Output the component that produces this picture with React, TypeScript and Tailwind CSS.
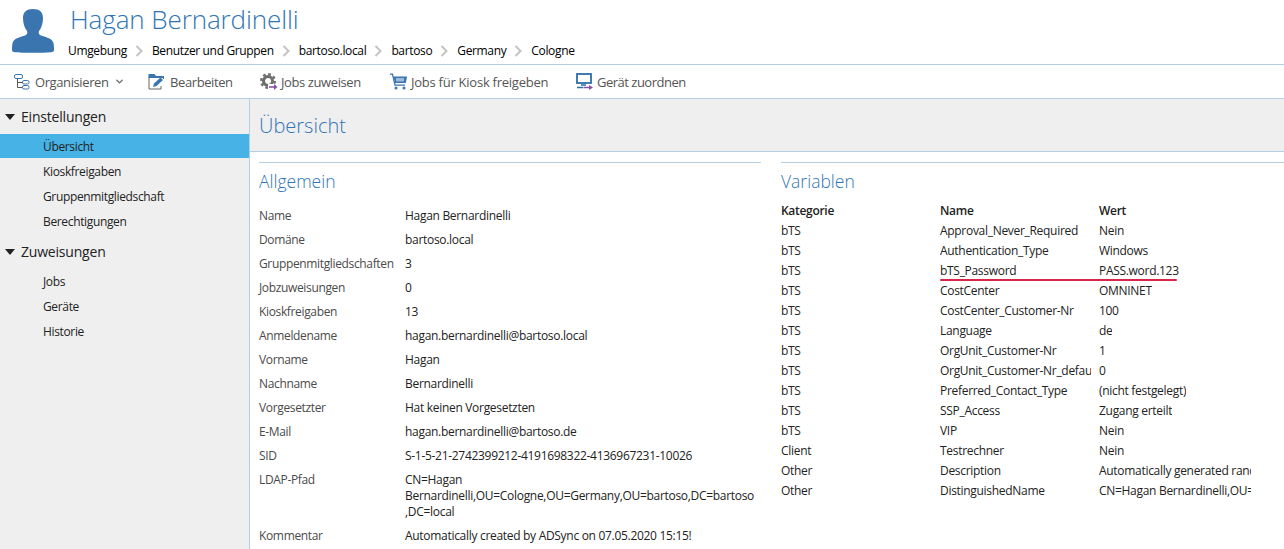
import { ChevronDown } from 'lucide-react';

const crumbs = ['Umgebung', 'Benutzer und Gruppen', 'bartoso.local', 'bartoso', 'Germany', 'Cologne'];

const general = [
  ['Name', 'Hagan Bernardinelli'],
  ['Domäne', 'bartoso.local'],
  ['Gruppenmitgliedschaften', '3'],
  ['Jobzuweisungen', '0'],
  ['Kioskfreigaben', '13'],
  ['Anmeldename', 'hagan.bernardinelli@bartoso.local'],
  ['Vorname', 'Hagan'],
  ['Nachname', 'Bernardinelli'],
  ['Vorgesetzter', 'Hat keinen Vorgesetzten'],
  ['E-Mail', 'hagan.bernardinelli@bartoso.de'],
  ['SID', 'S-1-5-21-2742399212-4191698322-4136967231-10026'],
];

const variables = [
  ['bTS', 'Approval_Never_Required', 'Nein'],
  ['bTS', 'Authentication_Type', 'Windows'],
  ['bTS', 'bTS_Password', 'PASS.word.123'],
  ['bTS', 'CostCenter', 'OMNINET'],
  ['bTS', 'CostCenter_Customer-Nr', '100'],
  ['bTS', 'Language', 'de'],
  ['bTS', 'OrgUnit_Customer-Nr', '1'],
  ['bTS', 'OrgUnit_Customer-Nr_default', '0'],
  ['bTS', 'Preferred_Contact_Type', '(nicht festgelegt)'],
  ['bTS', 'SSP_Access', 'Zugang erteilt'],
  ['bTS', 'VIP', 'Nein'],
  ['Client', 'Testrechner', 'Nein'],
  ['Other', 'Description', 'Automatically generated random value'],
  ['Other', 'DistinguishedName', 'CN=Hagan Bernardinelli,OU=Cologne,OU=Germany'],
];

function UserIcon() {
  return (
    <svg width="44" height="44" viewBox="0 0 44 44" className="shrink-0">
      <path
        fill="#3a75b0"
        d="M22 0C15.500 0 12 3 12 9C12 14 13.500 19 16 22C16.800 24 16 25.500 14 26.500C10 28 4.500 29 2.500 32C1 34 1 38 1 41C1 42.500 2 43 4 43.300C10 44 34 44 40 43.300C42 43 43 42.500 43 41C43 38 43 34 41.500 32C39.500 29 34 28 30 26.500C28 25.500 27.200 24 28 22C30.500 19 32 14 32 9C32 3 28.500 0 22 0z"
      />
    </svg>
  );
}

function OrgIcon() {
  return (
    <svg width="17" height="17" viewBox="0 0 17 17" fill="none" className="shrink-0">
      <rect x="1.500" y="1.500" width="8" height="4" rx="1.500" stroke="#3a75b0" />
      <rect x="9.500" y="7.500" width="6.500" height="3.500" rx="1.500" stroke="#3a75b0" />
      <rect x="9.500" y="12.500" width="6.500" height="3.500" rx="1.500" stroke="#3a75b0" />
      <path d="M4.500 6v8.500h5M4.500 9.500h5" stroke="#555" />
    </svg>
  );
}

function EditIcon() {
  return (
    <svg width="17" height="17" viewBox="0 0 17 17" fill="none" className="shrink-0">
      <path d="M.5 1h6l1.500 2h8v2H.5z" fill="#3a75b0" />
      <path d="M1 4v12h12v-3M15.500 4v2" stroke="#666" />
      <path d="M5 14l1-3.500 6.500-6 2.500 2.500-6.500 6z" fill="#3a75b0" />
    </svg>
  );
}

function JobsIcon() {
  return (
    <svg width="18" height="17" viewBox="0 0 18 17" fill="none" className="shrink-0 -mr-[2px]">
      <circle cx="8" cy="8" r="4.500" stroke="#6e6e6e" strokeWidth="3" />
      <circle cx="8" cy="8" r="6.800" stroke="#6e6e6e" strokeWidth="2.400" strokeDasharray="2.700 2.640" />
      <rect x="8" y="11" width="10" height="6" fill="#fff" />
      <path d="M9 14h6" stroke="#8a4fa3" strokeWidth="1.600" />
      <path d="M14 11l3.500 3-3.500 3z" fill="#8a4fa3" />
    </svg>
  );
}

function CartIcon() {
  return (
    <svg width="17" height="17" viewBox="0 0 17 17" fill="none" className="shrink-0 -mr-[1px]">
      <path d="M0 1.200h2.500l2.500 11h10" stroke="#3a75b0" strokeWidth="1.300" />
      <path d="M3.500 3.500H17l-1.200 6.500H5z" fill="#3a75b0" />
      <path d="M7 5v3.500M9 5v3.500M11 5v3.500M13 5v3.500" stroke="#fff" />
      <circle cx="6" cy="15" r="1.500" fill="#3a75b0" />
      <circle cx="14" cy="15" r="1.500" fill="#3a75b0" />
    </svg>
  );
}

function DeviceIcon() {
  return (
    <svg width="17" height="17" viewBox="0 0 17 17" fill="none" className="shrink-0 -mr-[1px]">
      <rect x="1" y="1" width="14" height="9" stroke="#2e6da4" strokeWidth="1.800" />
      <path d="M5 12h5M1 14.500h6.500" stroke="#2e6da4" strokeWidth="1.500" />
      <path d="M8 14.500h6" stroke="#8a4fa3" strokeWidth="1.500" />
      <path d="M13 12l4 2.500-4 2.500z" fill="#8a4fa3" />
    </svg>
  );
}

function Caret() {
  return <span className="w-0 h-0 border-l-[5px] border-r-[5px] border-t-[6px] border-l-transparent border-r-transparent border-t-[#222]" />;
}

function ToolButton({ icon, label, width, children }: { icon: React.ReactNode; label: string; width: string; children?: React.ReactNode }) {
  return (
    <div className={`flex items-center gap-[5px] ${width}`}>
      {icon}
      <span>{label}</span>
      {children}
    </div>
  );
}

export default function App() {
  return (
    <div className="w-[1284px] h-[549px] overflow-hidden bg-white text-[12px] leading-4 text-[#222] font-['Open_Sans','Noto_Sans',sans-serif] tracking-[-0.3px]">
      {/* Header */}
      <div className="h-[65px] flex items-start border-b border-[#b4cfe3] pl-[11px]">
        <div className="mt-[9px]"><UserIcon /></div>
        <div className="ml-[13px]">
          <div className="ml-[2px] h-[38px] text-[26px] leading-[38px] font-light text-[#2f75b5] tracking-[-0.1px]">Hagan Bernardinelli</div>
          <div className="flex items-center h-5 mt-[3px] text-black tracking-[-0.35px]">
            {crumbs.map((c, i) => (
              <div key={c} className="flex items-center">
                {i > 0 && (
                  <svg width="25" height="14" viewBox="0 0 25 14" fill="none">
                    <path d="M9.500 2l5 5-5 5" stroke="#c4c4c4" strokeWidth="2" />
                  </svg>
                )}
                <span>{c}</span>
              </div>
            ))}
          </div>
        </div>
      </div>

      {/* Toolbar */}
      <div className="h-[34px] flex items-center border-b border-[#b4cfe3] pl-[13px] text-[13px] text-[#555] tracking-[-0.4px]">
        <ToolButton width="w-[135px]" label="Organisieren" icon={<OrgIcon />}>
          <ChevronDown size={11} strokeWidth={3} className="text-[#666]" />
        </ToolButton>
        <ToolButton width="w-[112px]" label="Bearbeiten" icon={<EditIcon />} />
        <ToolButton width="w-[130px]" label="Jobs zuweisen" icon={<JobsIcon />} />
        <ToolButton width="w-[186px] tracking-[-0.25px]" label="Jobs für Kiosk freigeben" icon={<CartIcon />} />
        <ToolButton width="w-[130px] tracking-[-0.5px]" label="Gerät zuordnen" icon={<DeviceIcon />} />
      </div>

      <div className="flex h-[450px]">
        {/* Sidebar */}
        <div className="w-[250px] shrink-0 bg-[#efefef] border-r border-[#b4cfe3]">
          <div className="h-[35px] flex items-center pl-[5px] gap-[6px] text-[14px] tracking-[-0.2px]"><Caret />Einstellungen</div>
          <div className="h-[24px] flex items-center pl-[43px] pt-[2px] bg-[#46b2e6] tracking-[-0.35px]">Übersicht</div>
          {['Kioskfreigaben', 'Gruppenmitgliedschaft', 'Berechtigungen'].map((s) => (
            <div key={s} className="h-[25px] flex items-center pl-[43px] pt-[2px] tracking-[-0.35px]">{s}</div>
          ))}
          <div className="h-[35px] flex items-center pl-[5px] gap-[6px] text-[14px] tracking-[-0.2px] mt-[1px]"><Caret />Zuweisungen</div>
          {['Jobs', 'Geräte', 'Historie'].map((s) => (
            <div key={s} className="h-[25px] flex items-center pl-[43px] tracking-[-0.35px]">{s}</div>
          ))}
        </div>

        {/* Content */}
        <div className="flex-1 min-w-0">
          <div className="h-[53px] bg-[#efefef] border-b border-[#b4cfe3] pl-[9px] pt-[11px] text-[20px] leading-[32px] font-light text-[#2f75b5] tracking-normal">Übersicht</div>
          <div className="flex pl-[9px] pt-[10px]">
            <div className="w-[502px] shrink-0 border-t border-[#b4cfe3]">
              <div className="h-[35px] mt-[5px] text-[17.5px] leading-[26px] font-light text-[#2f75b5] tracking-normal">Allgemein</div>
              <div className="mt-[1px]">
                {general.map(([k, v]) => (
                  <div key={k} className="flex h-6 items-center">
                    <span className="w-[146px] shrink-0 text-[#4a4a4a] tracking-[-0.35px]">{k}</span>
                    <span>{v}</span>
                  </div>
                ))}
                <div className="flex pt-1 pb-[4px]">
                  <span className="w-[146px] shrink-0 text-[#4a4a4a] tracking-[-0.35px]">LDAP-Pfad</span>
                  <span className="break-all">CN=Hagan<br />Bernardinelli,OU=Cologne,OU=Germany,OU=bartoso,DC=bartoso<br />,DC=local</span>
                </div>
                <div className="flex h-6 items-center">
                  <span className="w-[146px] shrink-0 text-[#4a4a4a] tracking-[-0.35px]">Kommentar</span>
                  <span>Automatically created by ADSync on 07.05.2020 15:15!</span>
                </div>
              </div>
            </div>
            <div className="ml-[20px] flex-1 border-t border-[#b4cfe3]">
              <div className="h-[35px] mt-[5px] text-[17.5px] leading-[26px] font-light text-[#2f75b5] tracking-normal">Variablen</div>
              <div className="-mt-[2px] w-[470px]">
                <div className="flex h-5 items-center font-semibold">
                  <span className="w-[159px]">Kategorie</span>
                  <span className="w-[159px]">Name</span>
                  <span>Wert</span>
                </div>
                {variables.map(([c, n, v]) => (
                  <div key={n} className="relative flex h-5 items-center">
                    <span className="w-[159px] shrink-0">{c}</span>
                    <span className="w-[151px] mr-[8px] shrink-0 overflow-hidden whitespace-nowrap">{n}</span>
                    <span className="overflow-hidden whitespace-nowrap">{v}</span>
                    {n === 'bTS_Password' && <div className="absolute left-[159px] top-[18px] w-[237px] h-[2px] bg-[#d8264a] rounded-full" />}
                  </div>
                ))}
              </div>
            </div>
          </div>
        </div>
      </div>
    </div>
  );
}
